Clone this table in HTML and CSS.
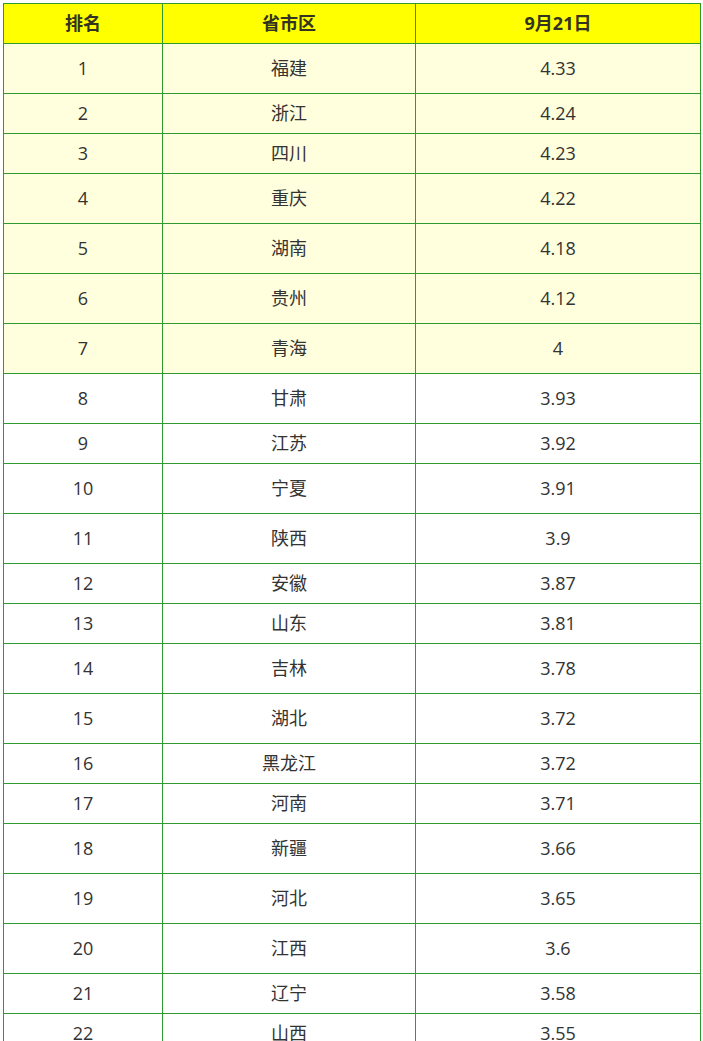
FILE: index.html
```html
<!DOCTYPE html>
<html lang="zh">
<head>
<meta charset="utf-8">
<title>排名</title>
<link rel="stylesheet" href="styles.css">
</head>
<body>
<table class="rank">
<colgroup><col class="c1"><col class="c2"><col class="c3"></colgroup>
<thead>
<tr class="head"><th>排名</th><th>省市区</th><th>9月21日</th></tr>
</thead>
<tbody>
<tr class="hl tall"><td>1</td><td>福建</td><td>4.33</td></tr>
<tr class="hl"><td>2</td><td>浙江</td><td>4.24</td></tr>
<tr class="hl"><td>3</td><td>四川</td><td>4.23</td></tr>
<tr class="hl tall"><td>4</td><td>重庆</td><td>4.22</td></tr>
<tr class="hl tall"><td>5</td><td>湖南</td><td>4.18</td></tr>
<tr class="hl tall"><td>6</td><td>贵州</td><td>4.12</td></tr>
<tr class="hl tall"><td>7</td><td>青海</td><td>4</td></tr>
<tr class="tall"><td>8</td><td>甘肃</td><td>3.93</td></tr>
<tr><td>9</td><td>江苏</td><td>3.92</td></tr>
<tr class="tall"><td>10</td><td>宁夏</td><td>3.91</td></tr>
<tr class="tall"><td>11</td><td>陕西</td><td>3.9</td></tr>
<tr><td>12</td><td>安徽</td><td>3.87</td></tr>
<tr><td>13</td><td>山东</td><td>3.81</td></tr>
<tr class="tall"><td>14</td><td>吉林</td><td>3.78</td></tr>
<tr class="tall"><td>15</td><td>湖北</td><td>3.72</td></tr>
<tr><td>16</td><td>黑龙江</td><td>3.72</td></tr>
<tr><td>17</td><td>河南</td><td>3.71</td></tr>
<tr class="tall"><td>18</td><td>新疆</td><td>3.66</td></tr>
<tr class="tall"><td>19</td><td>河北</td><td>3.65</td></tr>
<tr class="tall"><td>20</td><td>江西</td><td>3.6</td></tr>
<tr><td>21</td><td>辽宁</td><td>3.58</td></tr>
<tr><td>22</td><td>山西</td><td>3.55</td></tr>
</tbody>
</table>
</body>
</html>
```
FILE: styles.css
```css
html, body { margin: 0; padding: 0; background: #ffffff; }
body { padding: 3px 0 0 3px; }
.rank {
  border-collapse: collapse;
  width: 697px;
  table-layout: fixed;
  font-family: "Open Sans", "Noto Sans CJK SC", sans-serif;
  font-size: 18px;
  color: #333333;
}
.c1 { width: 159px; }
.c2 { width: 253px; }
.c3 { width: 285px; }
.rank th, .rank td {
  border: 1px solid #2f9a2f;
  text-align: center;
  vertical-align: middle;
  padding: 0 0 2px 0;
  line-height: 22px;
}
.head th {
  background: #ffff00;
  height: 37px;
  font-weight: bold;
  color: #333322;
}
.rank td { height: 37px; }
.rank tr.tall td { height: 47px; }
.rank tr.hl td { background: #ffffdd; }
```
